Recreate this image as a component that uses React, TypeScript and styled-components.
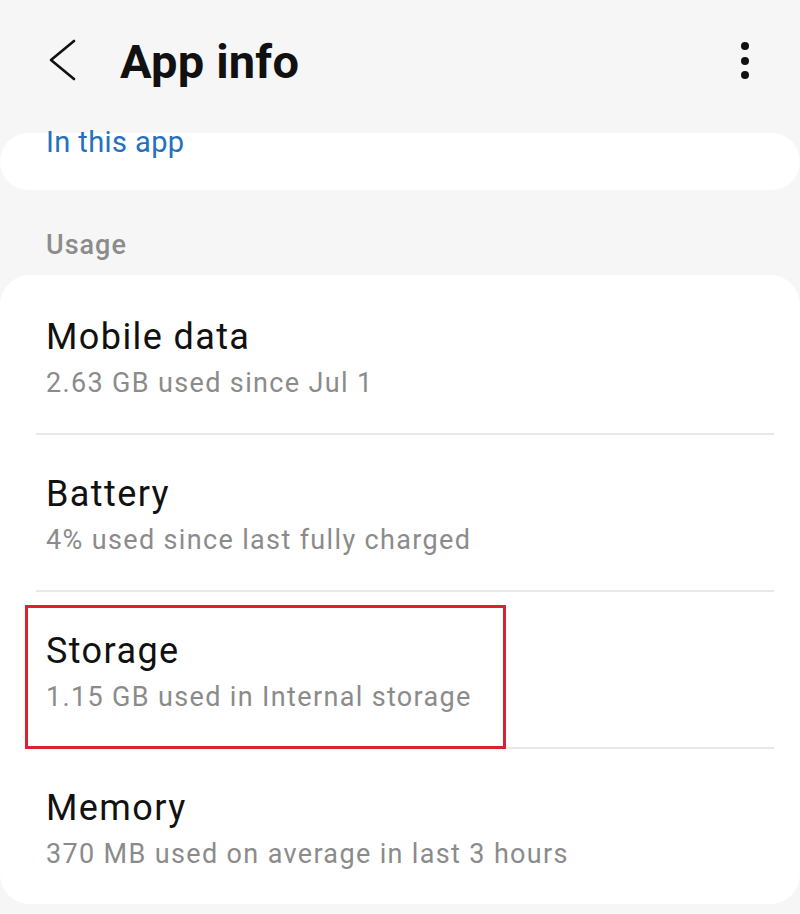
import React from 'react';
import styled, { createGlobalStyle } from 'styled-components';

const GlobalStyle = createGlobalStyle`
  html, body {
    margin: 0;
    padding: 0;
    background: #f6f6f6;
  }
  body {
    font-family: Roboto, 'Noto Sans', 'Liberation Sans', sans-serif;
    -webkit-font-smoothing: antialiased;
  }
`;

const Screen = styled.div`
  width: 800px;
  min-height: 914px;
  background: #f6f6f6;
  display: flex;
  flex-direction: column;
`;

const Header = styled.header`
  height: 122px;
  display: flex;
  align-items: center;
  padding: 0 40px 0 46px;
`;

const BackButton = styled.button`
  width: 32px;
  height: 44px;
  padding: 0;
  border: none;
  background: none;
  display: flex;
  align-items: center;
  justify-content: center;
  cursor: pointer;
`;

const Title = styled.h1`
  margin: 0 0 0 42px;
  font-size: 47px;
  font-weight: 700;
  color: #111;
  letter-spacing: 0.2px;
  flex: 1;
`;

const MoreButton = styled.button`
  width: 30px;
  height: 44px;
  padding: 0;
  border: none;
  background: none;
  display: flex;
  align-items: center;
  justify-content: center;
  cursor: pointer;
`;

const Card = styled.section<{ $top?: number }>`
  background: #fff;
  border-radius: 30px;
  margin-top: ${p => p.$top ?? 0}px;
`;

const TopCard = styled(Card)`
  height: 57px;
  padding-left: 46px;
`;

const LinkText = styled.div`
  margin-top: -8px;
  font-size: 29px;
  line-height: 34px;
  letter-spacing: 0.4px;
  color: #2370c0;
`;

const SectionLabel = styled.div`
  padding: 39px 46px 14px;
  font-size: 27px;
  line-height: 32px;
  font-weight: 500;
  letter-spacing: 1px;
  color: #8c8c8c;
`;

const ListCard = styled(Card)`
  padding: 3px 0 0;
`;

const Row = styled.div`
  position: relative;
  height: 155px;
  box-sizing: border-box;
  padding: 39px 46px 0;
`;

const RowTitle = styled.div`
  font-size: 36px;
  line-height: 40px;
  letter-spacing: 1.4px;
  color: #111;
`;

const RowSub = styled.div`
  margin-top: 10px;
  font-size: 27px;
  line-height: 32px;
  letter-spacing: 1.35px;
  color: #8b8b8b;
`;

const Divider = styled.div`
  height: 2px;
  margin: 0 26px 0 36px;
  background: #e8e8e8;
`;

const Highlight = styled.div`
  position: absolute;
  top: 13px;
  left: 25px;
  width: 481px;
  height: 144px;
  box-sizing: border-box;
  border: 3px solid #dc2230;
  z-index: 1;
  pointer-events: none;
`;

const items = [
  { title: 'Mobile data', sub: '2.63 GB used since Jul 1' },
  { title: 'Battery', sub: '4% used since last fully charged' },
  { title: 'Storage', sub: '1.15 GB used in Internal storage', marked: true },
  { title: 'Memory', sub: '370 MB used on average in last 3 hours' },
];

export default function App() {
  return (
    <>
      <GlobalStyle />
      <Screen>
        <Header>
          <BackButton aria-label="Back">
            <svg width="30" height="44" viewBox="0 0 30 44">
              <polyline points="27,2 4,21 27,40" fill="none" stroke="#111" strokeWidth="2.6" strokeLinecap="round" strokeLinejoin="round" />
            </svg>
          </BackButton>
          <Title>App info</Title>
          <MoreButton aria-label="More options">
            <svg width="12" height="40" viewBox="0 0 12 40">
              <circle cx="6" cy="5" r="4" fill="#111" />
              <circle cx="6" cy="20" r="4" fill="#111" />
              <circle cx="6" cy="34" r="4" fill="#111" />
            </svg>
          </MoreButton>
        </Header>

        <TopCard $top={11}>
          <LinkText>In this app</LinkText>
        </TopCard>

        <SectionLabel>Usage</SectionLabel>

        <ListCard>
          {items.map((item, i) => (
            <React.Fragment key={item.title}>
              {i > 0 && <Divider />}
              <Row>
                <RowTitle>{item.title}</RowTitle>
                <RowSub>{item.sub}</RowSub>
                {item.marked && <Highlight />}
              </Row>
            </React.Fragment>
          ))}
        </ListCard>
      </Screen>
    </>
  );
}
